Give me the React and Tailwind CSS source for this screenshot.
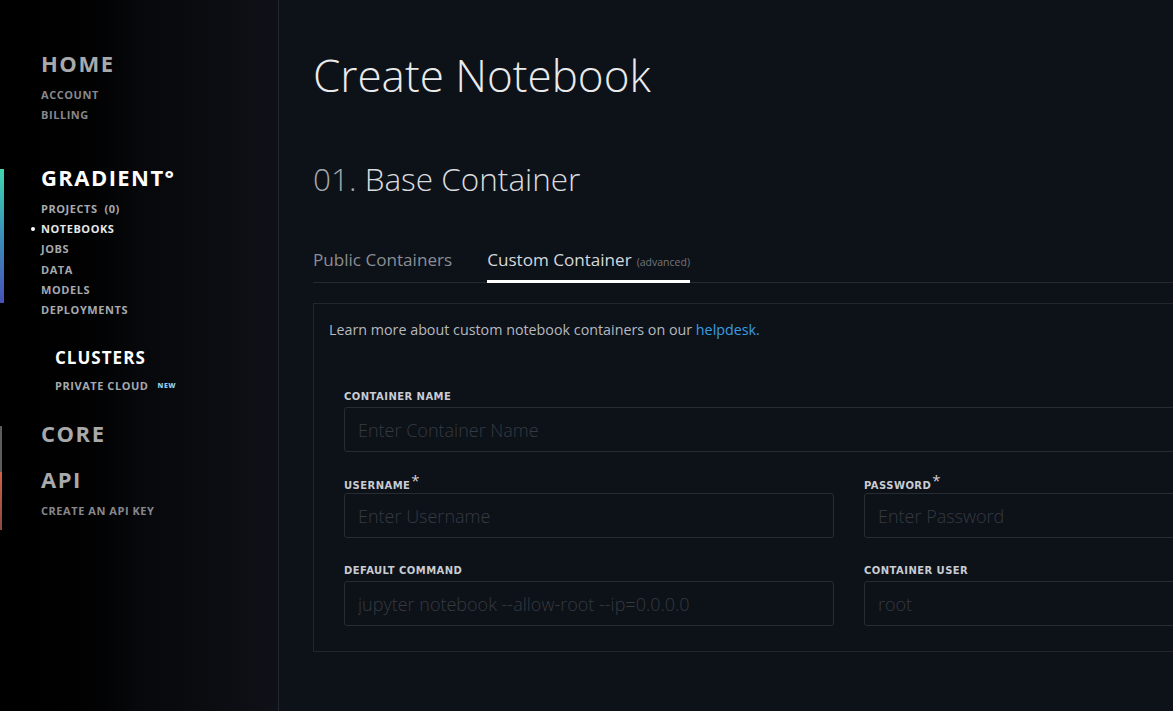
import React from "react";

const F = { fontFamily: '"Open Sans", "Liberation Sans", sans-serif' };

function Label({ children, star }) {
  return (
    <div
      className="h-[14px] leading-[14px] mb-[3px] text-[10px] font-bold tracking-[0.045em] text-[#c9ccd3] uppercase"
      style={{ fontFamily: '"DejaVu Sans", "Liberation Sans", sans-serif' }}
    >
      {children}
      {star && <span className="relative top-[-3px] ml-[1px] text-[15px] font-normal text-[#d9cdd0]" style={F}>*</span>}
    </div>
  );
}

function Input({ placeholder, className = "" }) {
  return (
    <input
      readOnly
      placeholder={placeholder}
      className={
        "block h-[45px] rounded-[3px] border border-[#272b32] bg-transparent px-[13px] text-[18px] font-light text-[#c0c0c0] outline-none placeholder:text-[#363a41] " +
        className
      }
      style={F}
    />
  );
}

export default function App() {
  return (
    <div className="flex h-[711px] w-[1173px] overflow-hidden bg-[#0d1118]" style={F}>
      {/* Sidebar */}
      <aside className="relative h-full w-[279px] shrink-0 border-r border-[#24272e] bg-gradient-to-r from-[#000000] via-[#07080b] to-[#0e1117]">
        <div className="absolute left-0 top-[169px] h-[134px] w-[4px] bg-gradient-to-b from-[#41d6ae] via-[#3a8fb8] to-[#4750b8]" />
        <div className="absolute left-0 top-[426px] h-[46px] w-[2px] bg-[#5a5c60]" />
        <div className="absolute left-0 top-[472px] h-[58px] w-[2px] bg-gradient-to-b from-[#d2604a] to-[#8a4a40]" />

        <div className="pl-[41px] pt-[48px]">
          <div className="h-[30px] text-[22px] font-bold leading-[30px] tracking-[0.07em] text-[#a8a9ab]">HOME</div>
          <div className="mt-[7px] text-[11px] font-bold leading-[20px] tracking-[0.05em] text-[#87888d]">
            <div>ACCOUNT</div>
            <div>BILLING</div>
          </div>

          <div className="mt-[37px] h-[30px] text-[22px] font-bold leading-[30px] tracking-[0.065em] text-white">GRADIENT°</div>
          <div className="mt-[7px] text-[11px] font-bold leading-[20px] tracking-[0.05em] text-[#a7a9ae]">
            <div>PROJECTS&nbsp;&nbsp;(0)</div>
            <div className="relative text-[#e6e7e9]">
              <span className="absolute left-[-10px] top-[8px] h-[4px] w-[4px] rounded-full bg-white" />
              NOTEBOOKS
            </div>
            <div>JOBS</div>
            <div className="leading-[21px]">DATA</div>
            <div>MODELS</div>
            <div>DEPLOYMENTS</div>
          </div>

          <div className="pl-[14px]">
            <div className="mt-[26px] h-[24px] text-[17px] font-bold leading-[24px] tracking-[0.06em] text-white">CLUSTERS</div>
            <div className="mt-[6px] flex items-center text-[11px] font-bold leading-[20px] tracking-[0.05em] text-[#a7a9ae]">
              PRIVATE CLOUD
              <span className="ml-[9px] text-[7px] font-extrabold tracking-[0.08em] text-[#8fcbe6]">NEW</span>
            </div>
          </div>

          <div className="mt-[22px] h-[30px] text-[22px] font-bold leading-[30px] tracking-[0.07em] text-[#a8a9ab]">CORE</div>
          <div className="mt-[16px] h-[30px] text-[22px] font-bold leading-[30px] tracking-[0.07em] text-[#a8a9ab]">API</div>
          <div className="mt-[7px] text-[11px] font-bold leading-[20px] tracking-[0.05em] text-[#87888d]">CREATE AN API KEY</div>
        </div>
      </aside>

      {/* Main */}
      <main className="shrink-0 pl-[34px] pt-[47px]">
        <h1 className="h-[56px] text-[44px] font-light leading-[56px] text-[#e9eaec]">Create Notebook</h1>
        <h2 className="mt-[56px] h-[40px] text-[31.5px] font-light leading-[40px] text-[#d9dbde]">
          <span className="text-[#a3a6ab]">01.</span> Base Container
        </h2>

        <div className="mt-[49px] flex w-[1071px] border-b border-[#262930]">
          <div className="pb-[8px] text-[17.1px] leading-[24px] text-[#8b8e94]">Public Containers</div>
          <div className="-mb-px ml-[35px] flex items-baseline border-b-[3px] border-white pb-[6px] text-[17.1px] leading-[24px] text-[#d6d8dc]">
            Custom Container
            <span className="ml-[5px] text-[10.5px] text-[#74777d]">(advanced)</span>
          </div>
        </div>

        <section className="mt-[20px] w-[1071px] border border-[#23272d] pb-[25px] pl-[15px] pt-[16px]">
          <p className="text-[14.3px] leading-[20px] text-[#b5b9c0]">
            Learn more about custom notebook containers on our <span className="text-[#3b9ce2]">helpdesk.</span>
          </p>

          <div className="pl-[15px] pt-[50px]">
            <Label>Container Name</Label>
            <Input placeholder="Enter Container Name" className="w-[1010px]" />

            <div className="mt-[24px] grid grid-cols-[490px_490px] gap-x-[30px]">
              <div>
                <Label star>Username</Label>
                <Input placeholder="Enter Username" className="w-full" />
              </div>
              <div>
                <Label star>Password</Label>
                <Input placeholder="Enter Password" className="w-full" />
              </div>
            </div>

            <div className="mt-[26px] grid grid-cols-[490px_490px] gap-x-[30px]">
              <div>
                <Label>Default Command</Label>
                <Input placeholder="jupyter notebook --allow-root --ip=0.0.0.0" className="w-full" />
              </div>
              <div>
                <Label>Container User</Label>
                <Input placeholder="root" className="w-full" />
              </div>
            </div>
          </div>
        </section>
      </main>
    </div>
  );
}
